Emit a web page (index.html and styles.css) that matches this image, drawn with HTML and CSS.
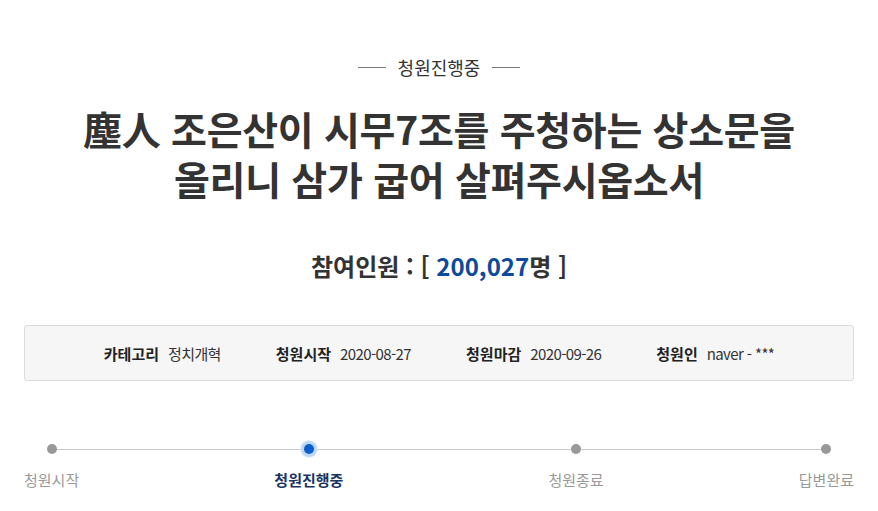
FILE: index.html
```html
<!DOCTYPE html>
<html lang="ko">
<head>
<meta charset="utf-8">
<link rel="stylesheet" href="styles.css">
</head>
<body>
<div class="page">
  <div class="status"><span class="dash"></span><span class="status-text">청원진행중</span><span class="dash"></span></div>
  <h1 class="title"><span class="line">塵人 조은산이 시무7조를 주청하는 상소문을</span><span class="line">올리니 삼가 굽어 살펴주시옵소서</span></h1>
  <h2 class="count">참여인원 : [ <span class="num">200,027</span>명 ]</h2>
  <ul class="info">
    <li><strong>카테고리</strong><span>정치개혁</span></li>
    <li><strong>청원시작</strong><span>2020-08-27</span></li>
    <li><strong>청원마감</strong><span>2020-09-26</span></li>
    <li><strong>청원인</strong><span>naver - ***</span></li>
  </ul>
  <div class="steps">
    <div class="track"></div>
    <div class="step"><i class="dot"></i><span>청원시작</span></div>
    <div class="step active"><i class="dot"></i><span>청원진행중</span></div>
    <div class="step"><i class="dot"></i><span>청원종료</span></div>
    <div class="step"><i class="dot"></i><span>답변완료</span></div>
  </div>
</div>
</body>
</html>
```
FILE: styles.css
```css
* { box-sizing: border-box; }
html, body { margin: 0; padding: 0; background: #fff; }
body {
  font-family: "Noto Sans CJK KR", "Noto Sans", sans-serif;
  color: #333;
}
.page { padding: 0 24px 0 24px; }
.status {
  display: flex;
  justify-content: center;
  align-items: center;
  gap: 12px;
  padding-top: 52px;
  height: 82px;
}
.dash { width: 28px; height: 1px; background: #777; }
.status-text { font-size: 18px; line-height: 28px; color: #333; }
.title {
  margin: 21px 0 0;
  display: flex;
  flex-direction: column;
  align-items: center;
  font-size: 39px;
  font-weight: 700;
  color: #333;
  letter-spacing: -0.3px;
}
.title .line { display: block; line-height: 50px; height: 50px; }
.count {
  margin: 46px 0 0;
  text-align: center;
  font-size: 24px;
  line-height: 34px;
  font-weight: 700;
  color: #333;
}
.num { color: #0b4a9c; }
.info {
  list-style: none;
  margin: 42px 0 0;
  padding: 0;
  height: 56px;
  background: #f6f6f6;
  border: 1px solid #dcdcdc;
  border-radius: 3px;
  display: flex;
  justify-content: center;
  align-items: center;
  gap: 55px;
  font-size: 15px;
}
.info li { display: flex; gap: 9px; align-items: center; }
.info strong { font-weight: 700; color: #222; }
.info span { color: #333; letter-spacing: -0.6px; }
.steps {
  position: relative;
  margin-top: 59px;
  display: flex;
  justify-content: space-between;
}
.track {
  position: absolute;
  left: 26px;
  right: 27px;
  top: 9px;
  height: 1px;
  background: #c8c8c8;
}
.step {
  position: relative;
  display: flex;
  flex-direction: column;
  align-items: center;
  gap: 15px;
  font-size: 15px;
  color: #999;
}
.dot {
  display: block;
  width: 10px;
  height: 10px;
  margin-top: 4px;
  border-radius: 50%;
  background: #999;
}
.step span { line-height: 22px; }
.step.active { color: #1a3563; font-weight: 700; margin-right: 10px; }
.step.active .dot {
  background: #0a5fcc;
  box-shadow: 0 0 0 3px #bcd8fa, 0 0 0 4px #e3effd;
}
```
